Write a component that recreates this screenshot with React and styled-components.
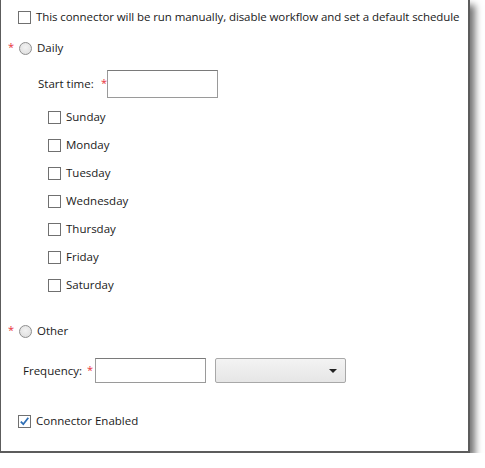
import React from "react";
import styled, { createGlobalStyle } from "styled-components";

const Global = createGlobalStyle`
  html, body { margin: 0; padding: 0; background: #ffffff; }
  body { font-family: "Open Sans", "Noto Sans", sans-serif; font-size: 11.5px; color: #1a1a1a; }
`;

const Panel = styled.div`
  box-sizing: border-box;
  width: 470px;
  height: 453px;
  background: #fff;
  border-left: 1px solid #5c5c5c;
  border-right: 2px solid #5c5c5c;
  border-bottom: 2px solid #5c5c5c;
  box-shadow: 5px 5px 7px rgba(0, 0, 0, 0.55);
  padding-top: 8px;
  display: flex;
  flex-direction: column;
`;

const Row = styled.div`
  display: flex;
  align-items: center;
  height: ${(p) => p.$h || 18}px;
  margin-top: ${(p) => p.$mt || 0}px;
  padding-left: ${(p) => p.$pl || 0}px;
`;

const Box = styled.span`
  box-sizing: border-box;
  width: 13px;
  height: 13px;
  border: 1px solid #707070;
  background: #fff;
  display: inline-flex;
  align-items: center;
  justify-content: center;
  flex: none;
`;

const Radio = styled.span`
  box-sizing: border-box;
  width: 13px;
  height: 13px;
  border-radius: 50%;
  border: 1px solid #8e8e8e;
  background: radial-gradient(circle at 50% 40%, #f2f2f2 0%, #e2e2e2 70%, #d8d8d8 100%);
  flex: none;
`;

const Label = styled.span`
  margin-left: ${(p) => p.$ml ?? 5}px;
  white-space: nowrap;
  line-height: 16px;
  letter-spacing: ${(p) => p.$ls || 0}px;
`;

const Req = styled.span`
  color: #e8303a;
  font-size: 11px;
  width: ${(p) => p.$w || 10}px;
  line-height: 12px;
  position: relative;
  top: -1px;
  flex: none;
`;

const FieldLabel = styled.span`
  width: ${(p) => p.$w}px;
  white-space: nowrap;
  flex: none;
`;

const Input = styled.div`
  box-sizing: border-box;
  width: ${(p) => p.$w}px;
  height: ${(p) => p.$h}px;
  border: 1px solid #9a9a9a;
  border-top-color: #7a7a7a;
  background: #fff;
  flex: none;
`;

const Select = styled.div`
  box-sizing: border-box;
  width: 131px;
  height: 25px;
  margin-left: 9px;
  border: 1px solid #a8a8a8;
  border-radius: 2px;
  background: linear-gradient(#f3f3f3, #e6e6e6);
  display: flex;
  align-items: center;
  justify-content: flex-end;
  padding-right: 8px;
  flex: none;
`;

const Arrow = styled.span`
  width: 0;
  height: 0;
  border-left: 4px solid transparent;
  border-right: 4px solid transparent;
  border-top: 4px solid #222;
`;

const DayList = styled.div`
  display: flex;
  flex-direction: column;
  gap: 10px;
  margin-top: 11px;
  padding-left: 47px;
`;

const Check = () => (
  <svg width="11" height="11" viewBox="0 0 11 11">
    <path d="M1.8 5.6 L4.3 8.2 L9.3 1.8" fill="none" stroke="#2f6fb5" strokeWidth="1.8" />
  </svg>
);

const days = ["Sunday", "Monday", "Tuesday", "Wednesday", "Thursday", "Friday", "Saturday"];

export default function App() {
  return (
    <>
      <Global />
      <Panel>
        <Row $pl={17}>
          <Box />
          <Label $ls={-0.08}>This connector will be run manually, disable workflow and set a default schedule</Label>
        </Row>
        <Row $mt={13} $pl={7}>
          <Req $w={11}>*</Req>
          <Radio />
          <Label>Daily</Label>
        </Row>
        <Row $mt={13} $h={27} $pl={37}>
          <FieldLabel $w={63}>Start time:</FieldLabel>
          <Req $w={6}>*</Req>
          <Input $w={111} $h={28} />
        </Row>
        <DayList>
          {days.map((d) => (
            <Row key={d}>
              <Box />
              <Label>{d}</Label>
            </Row>
          ))}
        </DayList>
        <Row $mt={28} $pl={7}>
          <Req $w={11}>*</Req>
          <Radio />
          <Label>Other</Label>
        </Row>
        <Row $mt={18} $h={25} $pl={22}>
          <FieldLabel $w={64}>Frequency:</FieldLabel>
          <Req $w={8}>*</Req>
          <Input $w={111} $h={25} />
          <Select>
            <Arrow />
          </Select>
        </Row>
        <Row $mt={29} $pl={17}>
          <Box>
            <Check />
          </Box>
          <Label>Connector Enabled</Label>
        </Row>
      </Panel>
    </>
  );
}
